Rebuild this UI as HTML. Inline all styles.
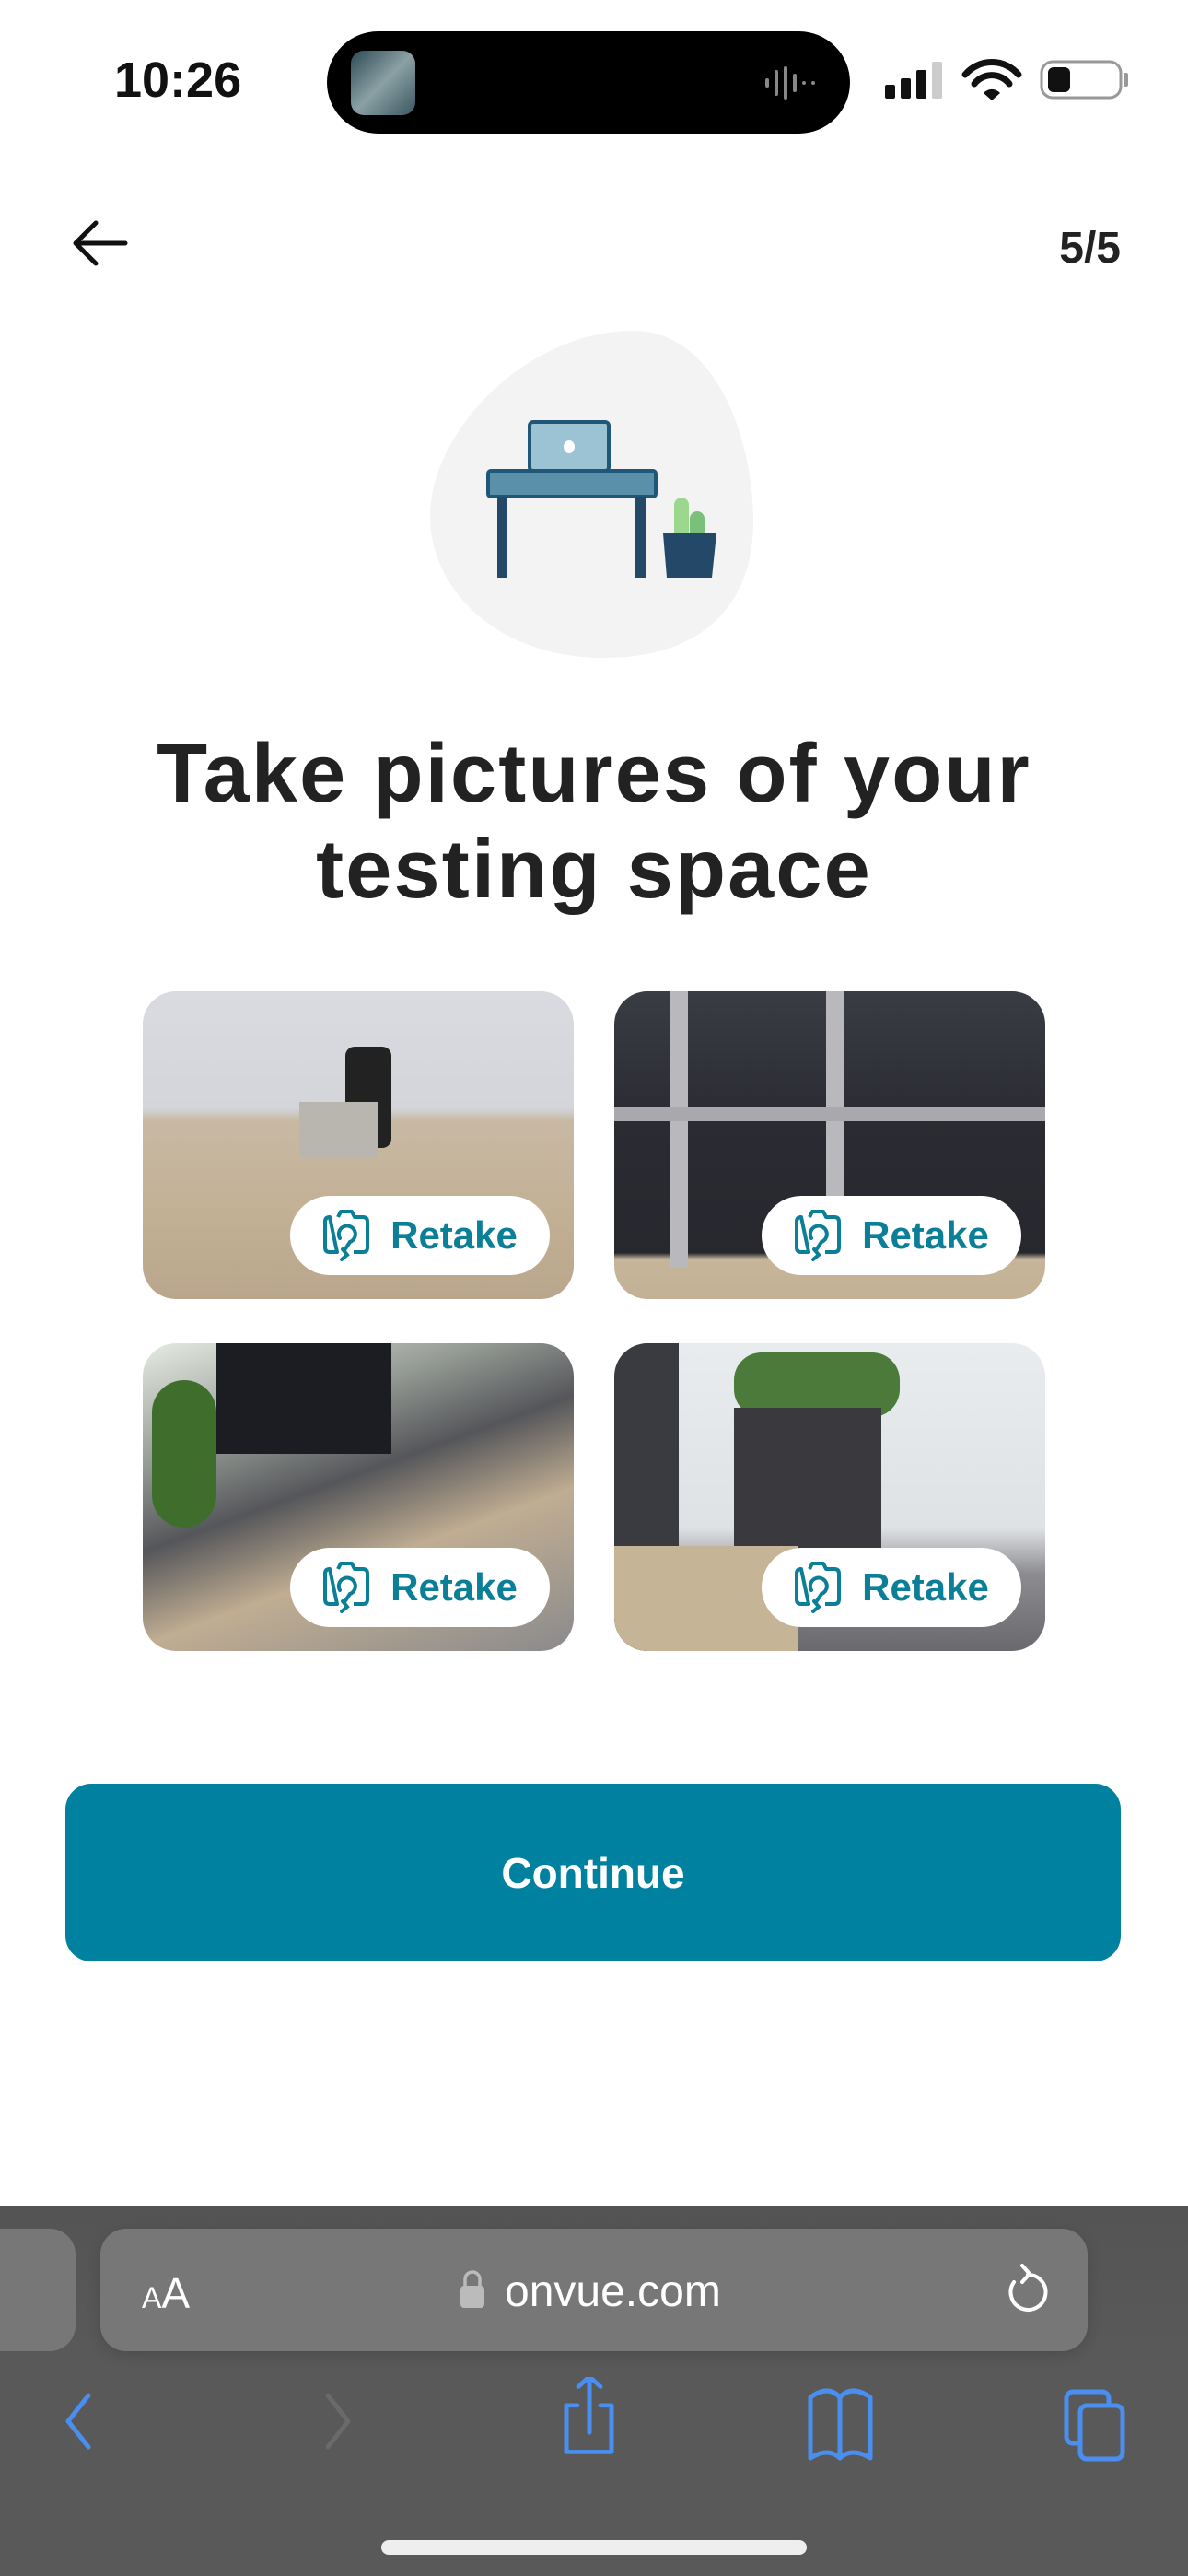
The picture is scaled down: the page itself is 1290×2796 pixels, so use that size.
<!DOCTYPE html>
<html><head><meta charset="utf-8"><style>
*{margin:0;padding:0;box-sizing:border-box}
body{width:1290px;height:2796px;background:#fff;position:relative;overflow:hidden;font-family:"Liberation Sans",sans-serif}
.abs{position:absolute}
.tile{position:absolute;width:468px;height:334px;border-radius:36px;overflow:hidden}
.pill{position:absolute;left:160px;top:222px;width:282px;height:86px;border-radius:43px;background:#fff;display:flex;align-items:center;justify-content:center;gap:22px;color:#0b7e98;font-weight:bold;font-size:42px}
</style></head><body>
<!-- status bar -->
<div class="abs" style="left:124px;top:56px;font-size:54px;font-weight:bold;color:#111">10:26</div>
<div class="abs" style="left:355px;top:34px;width:568px;height:111px;border-radius:56px;background:#000"></div>
<div class="abs" style="left:381px;top:55px;width:70px;height:70px;border-radius:14px;background:linear-gradient(135deg,#2e4a55,#8aa0a4 50%,#3b5660)"></div>
<svg class="abs" style="left:830px;top:70px" width="60" height="40"><g stroke="#888" stroke-width="4" stroke-linecap="round"><line x1="3" y1="17" x2="3" y2="23"/><line x1="13" y1="8" x2="13" y2="32"/><line x1="23" y1="4" x2="23" y2="36"/><line x1="33" y1="12" x2="33" y2="28"/><line x1="43" y1="20" x2="43" y2="20"/><line x1="53" y1="20" x2="53" y2="20"/></g></svg>
<svg class="abs" style="left:960px;top:64px" width="270" height="46">
<rect x="1" y="28" width="11" height="15" rx="2" fill="#111"/><rect x="18" y="21" width="11" height="22" rx="2" fill="#111"/><rect x="35" y="12" width="11" height="31" rx="2" fill="#111"/><rect x="52" y="3" width="11" height="40" rx="2" fill="#ccc"/>
<path d="M88 17 A38 38 0 0 1 146 17" stroke="#111" stroke-width="7" fill="none" stroke-linecap="round"/><path d="M98 27 A24 24 0 0 1 136 27" stroke="#111" stroke-width="7" fill="none" stroke-linecap="round"/><path d="M108 37 L117 45 L126 37 A12 12 0 0 0 108 37Z" fill="#111"/>
<rect x="171" y="3" width="86" height="39" rx="12" fill="none" stroke="#999" stroke-width="3"/><rect x="178" y="9" width="24" height="27" rx="6" fill="#111"/><rect x="260" y="15" width="5" height="15" rx="2" fill="#999"/>
</svg>
<!-- header -->
<svg class="abs" style="left:76px;top:238px" width="64" height="54"><path d="M60 26 H6 M28 4 L6 26 L28 48" stroke="#111" stroke-width="5" fill="none" stroke-linecap="round" stroke-linejoin="round"/></svg>
<div class="abs" style="right:73px;top:242px;font-size:48px;font-weight:bold;color:#222">5/5</div>
<!-- illustration -->
<svg class="abs" style="left:0;top:0" width="1290" height="760">
<path d="M688 359 C770 359 815 460 818 560 C820 650 770 714 655 714 C540 714 467 640 467 560 C467 470 570 359 688 359Z" fill="#f3f3f3"/>
<rect x="575" y="458" width="86" height="53" rx="4" fill="#9cc3d3" stroke="#205778" stroke-width="4"/>
<ellipse cx="618" cy="485" rx="6" ry="7" fill="#fff"/>
<rect x="530" y="511" width="182" height="28" rx="3" fill="#5a90aa" stroke="#205778" stroke-width="4"/>
<rect x="540" y="539" width="11" height="88" fill="#234868"/><rect x="690" y="539" width="11" height="88" fill="#234868"/>
<rect x="732" y="540" width="16" height="50" rx="8" fill="#9bd88e"/><rect x="749" y="555" width="16" height="35" rx="8" fill="#79c07a"/>
<path d="M720 579 H778 L773 627 H724Z" fill="#234868"/>
</svg>
<!-- title -->
<div class="abs" style="left:0;width:1290px;top:788px;text-align:center;font-size:90px;font-weight:bold;color:#222;line-height:104px;letter-spacing:2.2px">Take pictures of your<br>testing space</div>
<!-- tiles -->
<div class="tile" style="left:155px;top:1076px;background:linear-gradient(180deg,#d9dbe0 0%,#d3d5da 38%,#c8b9a4 42%,#c3b196 70%,#b9a68c 100%)">
<div class="abs" style="left:220px;top:60px;width:50px;height:110px;background:#222;border-radius:10px"></div>
<div class="abs" style="left:170px;top:120px;width:85px;height:60px;background:#b9b6b0"></div>
<div class="pill"><svg width="52" height="58" viewBox="0 0 52 58"><path d="M17 9 L20 3 H32 L35 9 H44 Q49 9 49 14 V42 Q49 47 44 47 H34 M16 47 H8 Q3 47 3 42 V14 Q3 9 8 9 Z" fill="none" stroke="#0b7e98" stroke-width="4" stroke-linejoin="round"/><path d="M19 32 A9 9 0 1 1 30 36 M22 44 L27 50 L21 55" fill="none" stroke="#0b7e98" stroke-width="4" stroke-linecap="round"/><path d="M30 36 L24 45" stroke="#0b7e98" stroke-width="4" stroke-linecap="round"/></svg>Retake</div></div>
<div class="tile" style="left:667px;top:1076px;background:linear-gradient(180deg,#3a3c44 0%,#2b2c33 40%,#27282e 85%,#c7b59b 87%,#c3b196 100%)">
<div class="abs" style="left:60px;top:0;width:20px;height:300px;background:#b9b9bd"></div><div class="abs" style="left:230px;top:0;width:20px;height:300px;background:#b9b9bd"></div><div class="abs" style="left:0;top:125px;width:468px;height:16px;background:#a9a9ad"></div>
<div class="pill"><svg width="52" height="58" viewBox="0 0 52 58"><path d="M17 9 L20 3 H32 L35 9 H44 Q49 9 49 14 V42 Q49 47 44 47 H34 M16 47 H8 Q3 47 3 42 V14 Q3 9 8 9 Z" fill="none" stroke="#0b7e98" stroke-width="4" stroke-linejoin="round"/><path d="M19 32 A9 9 0 1 1 30 36 M22 44 L27 50 L21 55" fill="none" stroke="#0b7e98" stroke-width="4" stroke-linecap="round"/><path d="M30 36 L24 45" stroke="#0b7e98" stroke-width="4" stroke-linecap="round"/></svg>Retake</div></div>
<div class="tile" style="left:155px;top:1458px;background:linear-gradient(160deg,#e6ebe4 0%,#9aa099 25%,#55565a 45%,#c0ad92 65%,#8a8a8c 100%)">
<div class="abs" style="left:80px;top:0;width:190px;height:120px;background:#1c1d22"></div>
<div class="abs" style="left:10px;top:40px;width:70px;height:160px;background:#3f6e2c;border-radius:40px"></div>
<div class="pill"><svg width="52" height="58" viewBox="0 0 52 58"><path d="M17 9 L20 3 H32 L35 9 H44 Q49 9 49 14 V42 Q49 47 44 47 H34 M16 47 H8 Q3 47 3 42 V14 Q3 9 8 9 Z" fill="none" stroke="#0b7e98" stroke-width="4" stroke-linejoin="round"/><path d="M19 32 A9 9 0 1 1 30 36 M22 44 L27 50 L21 55" fill="none" stroke="#0b7e98" stroke-width="4" stroke-linecap="round"/><path d="M30 36 L24 45" stroke="#0b7e98" stroke-width="4" stroke-linecap="round"/></svg>Retake</div></div>
<div class="tile" style="left:667px;top:1458px;background:linear-gradient(180deg,#e9ecef 0%,#dfe2e5 60%,#8c8c90 75%,#6a6a6e 100%)">
<div class="abs" style="left:0;top:0;width:70px;height:334px;background:#3a3b40"></div>
<div class="abs" style="left:130px;top:10px;width:180px;height:70px;background:#4b7a3a;border-radius:30px"></div>
<div class="abs" style="left:130px;top:70px;width:160px;height:190px;background:#3a3a3e"></div>
<div class="abs" style="left:0;top:220px;width:200px;height:114px;background:#c6b497"></div>
<div class="pill"><svg width="52" height="58" viewBox="0 0 52 58"><path d="M17 9 L20 3 H32 L35 9 H44 Q49 9 49 14 V42 Q49 47 44 47 H34 M16 47 H8 Q3 47 3 42 V14 Q3 9 8 9 Z" fill="none" stroke="#0b7e98" stroke-width="4" stroke-linejoin="round"/><path d="M19 32 A9 9 0 1 1 30 36 M22 44 L27 50 L21 55" fill="none" stroke="#0b7e98" stroke-width="4" stroke-linecap="round"/><path d="M30 36 L24 45" stroke="#0b7e98" stroke-width="4" stroke-linecap="round"/></svg>Retake</div></div>
<!-- continue -->
<div class="abs" style="left:71px;top:1936px;width:1146px;height:193px;border-radius:28px;background:#00819f;color:#fff;font-weight:bold;font-size:46px;display:flex;align-items:center;justify-content:center">Continue</div>
<!-- safari bar -->
<div class="abs" style="left:0;top:2394px;width:1290px;height:402px;background:#595959"></div>
<div class="abs" style="left:0;top:2394px;width:1290px;height:160px;background:linear-gradient(#545454,#595959)"></div>
<div class="abs" style="left:-40px;top:2419px;width:122px;height:133px;border-radius:28px;background:#777"></div>
<div class="abs" style="left:109px;top:2419px;width:1072px;height:133px;border-radius:28px;background:#777;box-shadow:0 4px 16px rgba(0,0,0,.15)"></div>
<div class="abs" style="left:154px;top:2462px;color:#fff;font-size:46px"><span style="font-size:32px">A</span>A</div>
<svg class="abs" style="left:499px;top:2462px" width="28" height="44"><path d="M6 20 V12 A8 8 0 0 1 22 12 V20" stroke="#bbb" stroke-width="3.5" fill="none"/><rect x="1" y="19" width="26" height="24" rx="4" fill="#bbb"/></svg>
<div class="abs" style="left:548px;top:2460px;color:#fff;font-size:48px">onvue.com</div>
<svg class="abs" style="left:1090px;top:2455px" width="50" height="64"><path d="M26 14 A19 19 0 1 1 11 22" stroke="#fff" stroke-width="4" fill="none" stroke-linecap="round"/><path d="M20 4 L28 13 L20 22" stroke="#fff" stroke-width="4" fill="none" stroke-linecap="round" stroke-linejoin="round"/></svg>
<svg class="abs" style="left:0;top:2580px" width="1290" height="110">
<path d="M96 20 L74 48 L96 76" stroke="#4a8ef0" stroke-width="5" fill="none" stroke-linecap="round" stroke-linejoin="round"/>
<path d="M356 20 L378 48 L356 76" stroke="#6a6a6a" stroke-width="5" fill="none" stroke-linecap="round" stroke-linejoin="round"/>
<path d="M627 40 H615 V95 H664 V40 H652 M640 6 V72 M628 18 L640 6 L652 18" stroke="#4a8ef0" stroke-width="5" fill="none" stroke-linecap="round" stroke-linejoin="round" transform="translate(0,-6) scale(1,0.92)"/>
<path d="M912 88 Q899 76 880 88 V22 Q899 8 912 22 Q925 8 945 22 V88 Q925 76 912 88 Z M912 22 V86" stroke="#4a8ef0" stroke-width="5" fill="none" stroke-linejoin="round"/>
<rect x="1158" y="16" width="46" height="56" rx="7" stroke="#4a8ef0" stroke-width="5" fill="none"/>
<rect x="1173" y="31" width="46" height="58" rx="7" stroke="#4a8ef0" stroke-width="5" fill="#595959"/>
</svg>
<div class="abs" style="left:414px;top:2757px;width:462px;height:16px;border-radius:8px;background:#eee"></div>
</body></html>
